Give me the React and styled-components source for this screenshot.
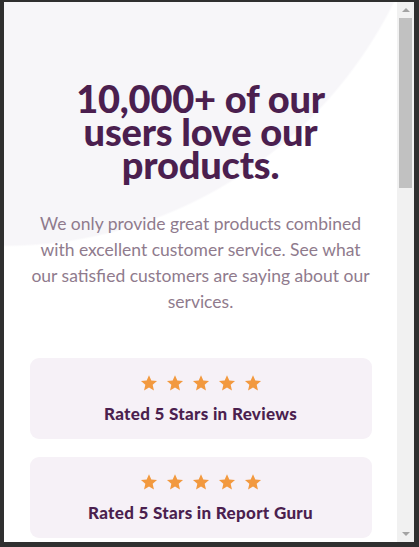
import React from "react";
import styled, { createGlobalStyle } from "styled-components";

const GlobalStyle = createGlobalStyle`
  html, body {
    margin: 0;
    padding: 0;
    background: #2f2f2f;
  }
`;

const Backdrop = styled.div`
  display: flex;
  height: 547px;
  padding: 2px 5px 5px 4px;
  box-sizing: border-box;
  background: #2f2f2f;
`;

const Modal = styled.div`
  flex: 1;
  overflow: hidden;
  background-color: #ffffff;
  background-image: radial-gradient(
    ellipse 438px 445px at 0px -200px,
    #f7f6f9 0,
    #f7f6f9 99.5%,
    rgba(255, 255, 255, 0) 100%
  );
  background-repeat: no-repeat;
`;

const BarraRolagem = styled.div`
  width: 17px;
  display: flex;
  flex-direction: column;
  align-items: center;
  background: #f1f1f1;
`;

const Seta = styled.div`
  height: 16px;
  display: flex;
  align-items: center;
  justify-content: center;
  &::before {
    content: "";
    border-left: 4px solid transparent;
    border-right: 4px solid transparent;
    ${(p) =>
      p.$baixo
        ? "border-top: 4px solid #a3a3a3;"
        : "border-bottom: 4px solid #a3a3a3;"}
  }
`;

const Polegar = styled.div`
  width: 13px;
  height: 170px;
  background: #c1c1c1;
`;

const Espaco = styled.div`
  flex: 1;
`;

const Content = styled.div`
  display: flex;
  flex-direction: column;
  align-items: center;
  padding: 80px 0 0 0;
`;

const Titulo = styled.h1`
  margin: 0;
  font-family: "Lato", sans-serif;
  font-weight: 900;
  font-size: 38px;
  line-height: 33px;
  letter-spacing: -0.2px;
  color: #4b1f4f;
  text-align: center;
  width: 280px;
`;

const Descricao = styled.p`
  margin: 30px 0 0 0;
  font-family: "Lato", sans-serif;
  font-weight: 400;
  font-size: 17.5px;
  line-height: 26px;
  color: #8f7b8d;
  text-align: center;
`;

const Lista = styled.div`
  display: flex;
  flex-direction: column;
  gap: 18px;
  width: 342px;
  margin-top: 43px;
`;

const Card = styled.div`
  display: flex;
  flex-direction: column;
  align-items: center;
  gap: 12px;
  height: 81px;
  box-sizing: border-box;
  padding-top: 16px;
  border-radius: 9px;
  background: #f6f1f7;
`;

const Estrelas = styled.div`
  display: flex;
  gap: 8px;
`;

const Rotulo = styled.div`
  font-family: "Lato", sans-serif;
  font-weight: 900;
  font-size: 17px;
  line-height: 20px;
  letter-spacing: 0.3px;
  color: #4b1f4f;
`;

const Estrela = () => (
  <svg width="18" height="18" viewBox="0 0 24 24">
    <path
      d="M12 1.5l3.1 7.1 7.6.7-5.8 5.1 1.7 7.6L12 18.1 5.4 22l1.7-7.6L1.3 9.3l7.6-.7z"
      fill="#f2993f"
    />
  </svg>
);

const avaliacoes = ["Rated 5 Stars in Reviews", "Rated 5 Stars in Report Guru"];

export default function App() {
  return (
    <>
      <GlobalStyle />
      <Backdrop>
        <Modal>
          <Content>
            <Titulo>10,000+ of our users love our products.</Titulo>
            <Descricao>
              We only provide great products combined
              <br />
              with excellent customer service. See what
              <br />
              our satisfied customers are saying about our
              <br />
              services.
            </Descricao>
            <Lista>
              {avaliacoes.map((texto) => (
                <Card key={texto}>
                  <Estrelas>
                    {[0, 1, 2, 3, 4].map((i) => (
                      <Estrela key={i} />
                    ))}
                  </Estrelas>
                  <Rotulo>{texto}</Rotulo>
                </Card>
              ))}
            </Lista>
          </Content>
        </Modal>
        <BarraRolagem>
          <Seta />
          <Polegar />
          <Espaco />
          <Seta $baixo />
        </BarraRolagem>
      </Backdrop>
    </>
  );
}
